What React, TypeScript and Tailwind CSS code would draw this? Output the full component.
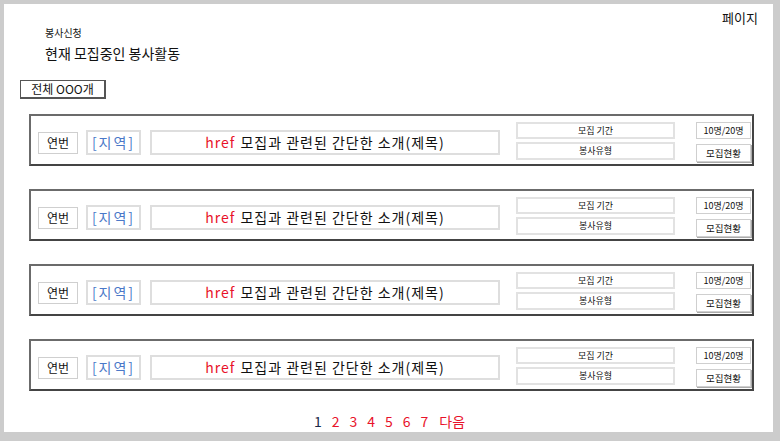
import React from "react";

const font = { fontFamily: '"Noto Sans CJK KR", "Noto Sans", sans-serif' };

function ActivityCard() {
  return (
    <div className="flex h-[52px] w-[725px] items-start border-2 border-[#6b6b6b] border-r-[#444] border-b-[#444] bg-white pl-[7px]">
      <div className="mt-[16px] flex h-[22px] w-[40px] items-center justify-center border border-[#cfcfcf] text-[12px] text-[#111]">
        연번
      </div>
      <div className="ml-[8px] mt-[14px] flex h-[25px] w-[55px] items-center justify-center border-2 border-[#dedede] text-[14px] tracking-[2px] text-[#4a78c8]">
        [지역]
      </div>
      <div className="ml-[9px] mt-[14px] flex h-[25px] w-[350px] items-center justify-center border-2 border-[#dedede] text-[14px] tracking-[1px] text-[#111]">
        <span className="text-[#e8122a]">href</span>
        <span className="ml-[5px]">모집과 관련된 간단한 소개(제목)</span>
      </div>
      <div className="ml-[16px] mt-[6px] flex w-[159px] flex-col gap-[3px]">
        <div className="flex h-[17px] items-center justify-center border-2 border-[#e2e2e2] text-[9px] text-[#111]">
          모집 기간
        </div>
        <div className="flex h-[18px] items-center justify-center border-2 border-[#e2e2e2] text-[9px] text-[#111]">
          봉사유형
        </div>
      </div>
      <div className="ml-[21px] mt-[6px] flex w-[55px] flex-col gap-[5px]">
        <div className="flex h-[17px] items-center justify-center border border-[#cfcfcf] text-[9px] text-[#111]">
          10명/20명
        </div>
        <div className="flex h-[18px] items-center justify-center border border-[#cfcfcf] text-[9.5px] text-[#111] shadow-[1px_1px_0_#aaa]">
          모집현황
        </div>
      </div>
    </div>
  );
}

export default function App() {
  const pages = ["2", "3", "4", "5", "6", "7"];
  return (
    <div className="h-[441px] w-[780px] bg-[#cccccc] pl-[4px] pt-[4px]" style={font}>
      <div className="flex h-[428px] w-[769px] flex-col bg-white">
        <div className="mt-[6px] flex h-[16px] justify-end pr-[15px] text-[13px] leading-[16px] text-[#111]">
          페이지
        </div>
        <div className="ml-[41px] mt-[1px] text-[10px] leading-[12px] text-[#111]">봉사신청</div>
        <div className="ml-[41px] mt-[5px] text-[14px] leading-[18px] text-[#111]">현재 모집중인 봉사활동</div>
        <div className="ml-[16px] mt-[18px] flex h-[19px] w-[86px] items-center justify-center border border-[#555] border-b-2 border-r-2 text-[12px] text-[#111]">
          전체 OOO개
        </div>
        <div className="ml-[25px] mt-[15px] flex flex-col gap-[23px]">
          <ActivityCard />
          <ActivityCard />
          <ActivityCard />
          <ActivityCard />
        </div>
        <div className="ml-[2px] mt-[21px] flex justify-center gap-[10px] text-[14px] leading-[18px]">
          <span className="text-[#1a2a4a]">1</span>
          {pages.map((p) => (
            <span key={p} className="text-[#e8122a]">
              {p}
            </span>
          ))}
          <span className="ml-[1px] text-[#e8122a]">다음</span>
        </div>
      </div>
    </div>
  );
}
